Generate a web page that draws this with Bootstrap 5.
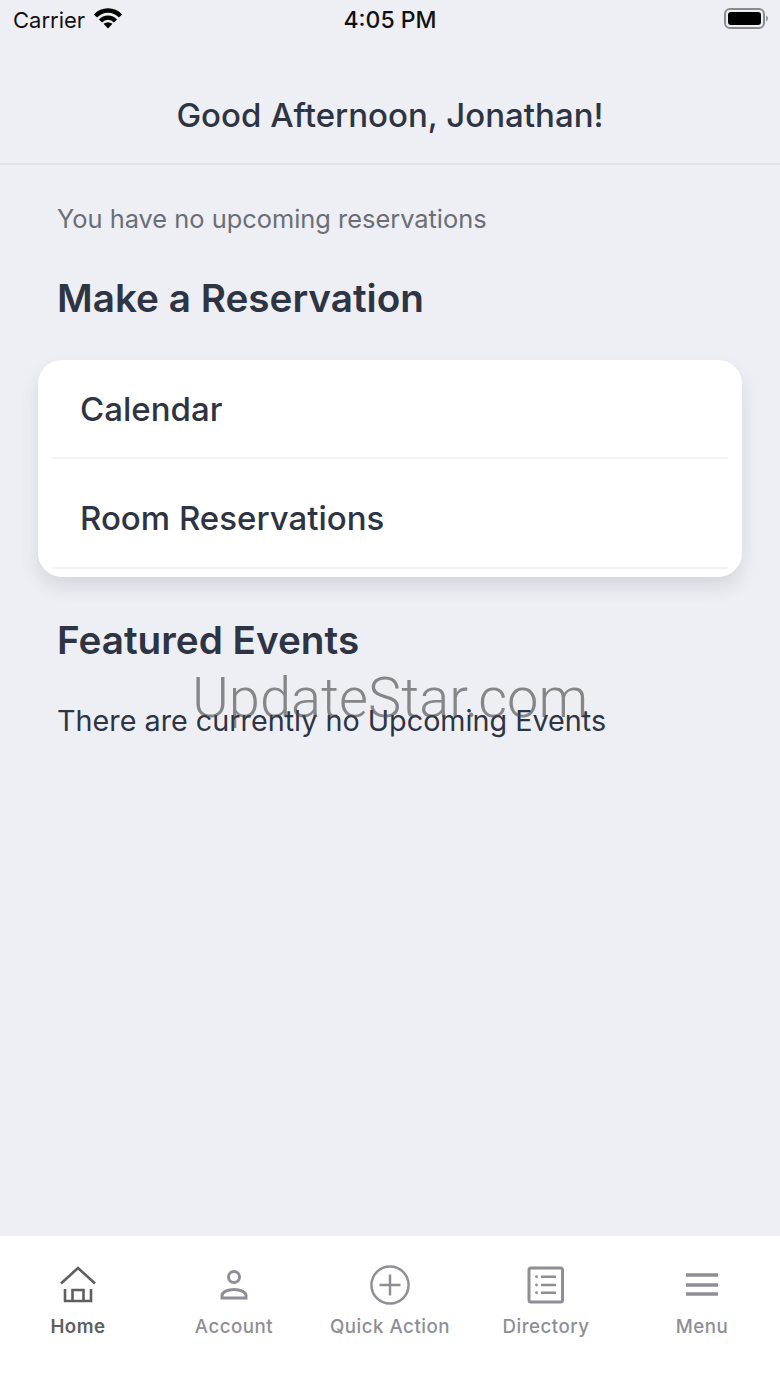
<!DOCTYPE html>
<html lang="en">
<head>
    <meta charset="UTF-8">
    <meta name="viewport" content="width=device-width, initial-scale=1">
    <title>Home</title>
    <link href="https://cdn.jsdelivr.net/npm/bootstrap@5.3.0/dist/css/bootstrap.min.css" rel="stylesheet">
    <style>
        body {
          background: #edeff4;
          font-family: Inter, "Liberation Sans", sans-serif;
          color: #2f3443;
          height: 1387px;
          overflow: hidden;
        }
        .app-screen { height: 1387px; position: relative; }
        .status-bar {
          height: 40px;
          padding: 0 10px 4px 13px;
          font-size: 22px;
          color: #111;
          position: relative;
        }
        .status-time { position: absolute; left: 0; right: 0; top: 6px; text-align: center; font-size: 23px; font-weight: 500; line-height: 28px; }
        .status-carrier { line-height: 28px; margin-top: 3px; }
        .page-header {
          height: 125px;
          border-bottom: 2px solid #e2e3e7;
          padding-top: 50px;
          text-align: center;
          font-size: 33px;
          line-height: 50px;
          font-weight: 500;
        }
        .page-main { padding: 0 38px; }
        .no-res { margin: 37px 19px 0; font-size: 25.4px; line-height: 34px; color: #6b6e76; }
        .sect-title { font-size: 38.7px; line-height: 50px; font-weight: 600; margin: 0 19px; }
        .make-title { margin-top: 37px; }
        .events-title { margin-top: 38px; }
        .res-card {
          background: #fff;
          border-radius: 24px;
          height: 217px;
          padding: 0 14px;
          margin-top: 37px;
          box-shadow: 0 10px 18px rgba(60, 64, 80, .13);
        }
        .res-row {
          height: 99px;
          border-width: 0 0 2px;
          border-style: solid;
          border-color: #f1f2f4;
          padding: 2px 28px 0;
          font-size: 33px;
          font-weight: 500;
          background: none;
          color: inherit;
        }
        .res-row-second { height: 110px; padding-top: 12px; }
        .no-events { margin: 37px 19px 0; font-size: 28.75px; line-height: 38px; }
        .watermark {
          position: absolute;
          left: 192px;
          top: 660px;
          font-family: Roboto, sans-serif;
          font-weight: 300;
          font-size: 56px;
          line-height: 76px;
          color: rgba(70, 70, 70, .62);
          white-space: nowrap;
        }
        .tab-strip {
          position: absolute;
          left: 0; right: 0; bottom: 0;
          height: 151px;
          background: #fff;
          padding-top: 29px;
        }
        .tab-cell { width: 156px; color: #8e8e96; font-size: 18.7px; font-weight: 500; letter-spacing: .5px; line-height: 26px; }
        .tab-cell svg { display: block; margin-bottom: 9px; }
        .tab-active { color: #5f5f5d; font-weight: 600; }
    </style>
</head>
<body>
<div class="app-screen">
    <div class="status-bar d-flex align-items-center justify-content-between">
        <div class="d-flex align-items-center gap-2">
            <span class="status-carrier">Carrier</span>
            <svg width="30" height="22" viewBox="0 0 30 22" fill="none" stroke="#000">
                <path d="M2.500 9A17 17 0 0 1 27.500 9" stroke-width="4.500"/>
                <path d="M7.500 14A10 10 0 0 1 22.500 14" stroke-width="4.200"/>
                <path d="M15 21.500 10.500 16.800Q15 13.500 19.500 16.800z" fill="#000" stroke="none"/>
            </svg>
        </div>
        <div class="status-time">4:05 PM</div>
        <svg width="47" height="22" viewBox="0 0 47 22">
            <rect x="2" y="2" width="39" height="19" rx="5" fill="none" stroke="#8b8b8b" stroke-width="2"/>
            <rect x="5" y="5" width="33" height="13" rx="3" fill="#000"/>
            <path d="M43 8.500c1.300.4 2 1.600 2 3s-.7 2.600-2 3z" fill="#999"/>
        </svg>
    </div>
    <div class="page-header">Good Afternoon, Jonathan!</div>
    <div class="page-main">
        <p class="no-res">You have no upcoming reservations</p>
        <h2 class="sect-title make-title">Make a Reservation</h2>
        <div class="res-card list-group">
            <a class="res-row list-group-item d-flex align-items-center rounded-0">Calendar</a>
            <a class="res-row res-row-second list-group-item d-flex align-items-center rounded-0">Room Reservations</a>
        </div>
        <h2 class="sect-title events-title">Featured Events</h2>
        <p class="no-events">There are currently no Upcoming Events</p>
    </div>
    <div class="watermark">UpdateStar.com</div>
    <div class="tab-strip d-flex justify-content-center">
        <div class="tab-cell tab-active d-flex flex-column align-items-center">
            <svg width="40" height="40" viewBox="0 0 40 40" fill="none" stroke="#5f5f5d" stroke-width="2.600">
                <path d="M3 18.500 20 3l17 15.500"/>
                <path d="M7 24v12h26V24M14.500 36V25h11v11"/>
            </svg>
            <span>Home</span>
        </div>
        <div class="tab-cell d-flex flex-column align-items-center">
            <svg width="40" height="40" viewBox="0 0 40 40" fill="none" stroke="#8e8e96" stroke-width="3">
                <circle cx="20" cy="12" r="5.500"/>
                <path d="M8 33v-2.500c0-3.500 6-6 12-6s12 2.500 12 6V33z"/>
            </svg>
            <span>Account</span>
        </div>
        <div class="tab-cell d-flex flex-column align-items-center">
            <svg width="44" height="40" viewBox="0 0 44 42" fill="none" stroke="#8e8e96" stroke-width="2.600">
                <circle cx="22" cy="21" r="19.500"/>
                <path d="M22 10v22M11 21h22"/>
            </svg>
            <span>Quick Action</span>
        </div>
        <div class="tab-cell d-flex flex-column align-items-center">
            <svg width="40" height="40" viewBox="0 0 40 40" fill="none" stroke="#8e8e96" stroke-width="3">
                <rect x="3" y="3" width="33.500" height="34" rx="2"/>
                <path d="M15 11.700h15M15 20h15M15 27.700h15" stroke-width="2.600"/>
                <circle cx="10.500" cy="11.700" r="1.400" fill="#8e8e96" stroke="none"/>
                <circle cx="10.500" cy="20" r="1.400" fill="#8e8e96" stroke="none"/>
                <circle cx="10.500" cy="27.700" r="1.400" fill="#8e8e96" stroke="none"/>
            </svg>
            <span>Directory</span>
        </div>
        <div class="tab-cell d-flex flex-column align-items-center">
            <svg width="40" height="40" viewBox="0 0 40 40" fill="none" stroke="#8e8e96" stroke-width="3.400">
                <path d="M4 10h32M4 20h32M4 29h32"/>
            </svg>
            <span>Menu</span>
        </div>
    </div>
</div>
<script src="https://cdn.jsdelivr.net/npm/bootstrap@5.3.0/dist/js/bootstrap.bundle.min.js"></script>
</body>
</html>
